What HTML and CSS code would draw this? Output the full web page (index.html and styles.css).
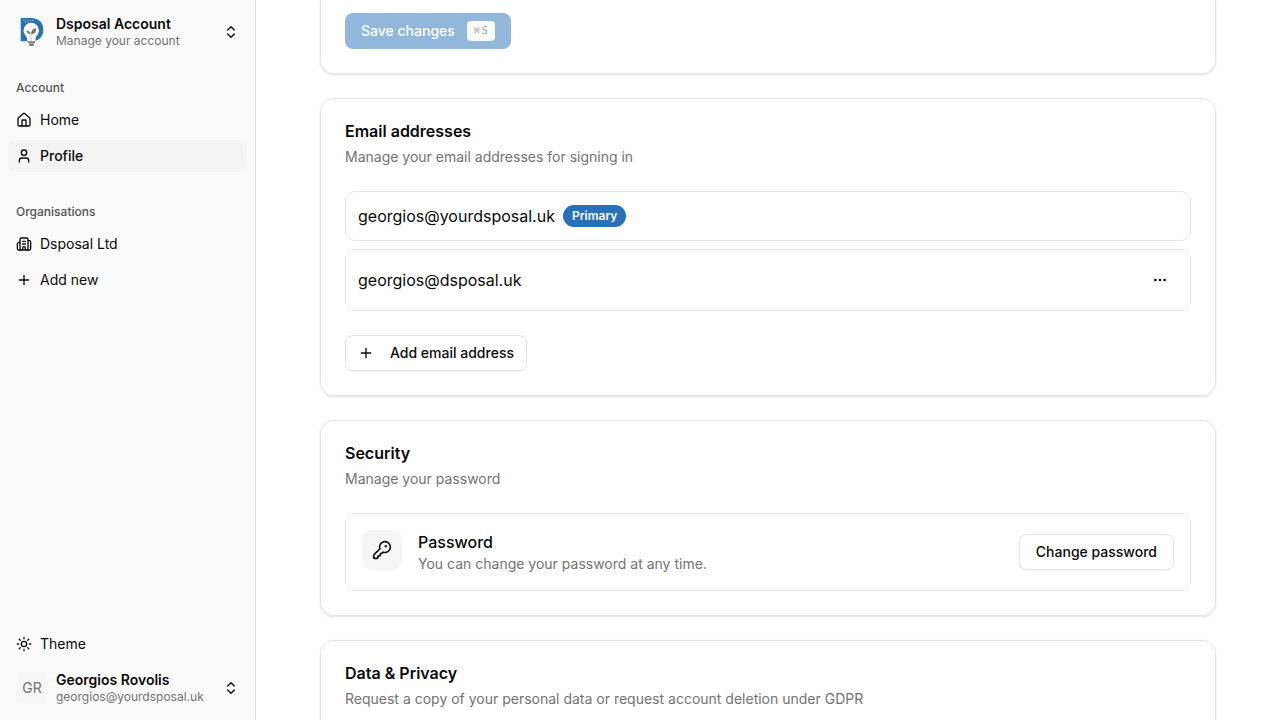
FILE: index.html
```
<!DOCTYPE html>
<html lang="en">
<head>
    <meta charset="UTF-8">
    <meta name="viewport" content="width=device-width, initial-scale=1.0">
    <title>Profile - Dsposal Account</title>
    <link rel="stylesheet" href="styles.css">
</head>
<body>
    <aside class="sidebar">
        <button class="account-btn" type="button">
            <svg class="logo" viewBox="0 0 32 32" aria-hidden="true">
                <path fill="#2771b8" d="M4.700 2H15c8 0 12.300 5 12.300 11.700S23 25.300 15 25.300H4.700z"/>
                <g fill="#fff">
                    <circle cx="8" cy="4.500" r=".5"/><circle cx="11" cy="4.500" r=".5"/><circle cx="14" cy="4.500" r=".5"/><circle cx="17" cy="4.500" r=".5"/>
                    <circle cx="9.500" cy="6.500" r=".5"/><circle cx="12.500" cy="6.500" r=".4"/>
                    <path d="M15.300 6.700a7.800 7.800 0 0 1 7.700 7.700c0 3.600-2.600 4.800-3.300 7.600l-.7 4h-7.400l-.7-4c-.7-2.800-3.400-4-3.400-7.600a7.800 7.800 0 0 1 7.800-7.700z"/>
                </g>
                <path fill="#777" d="M14.600 18c-2.500.3-3.900-1-4.100-3.500 2.500 0 4 1.200 4.100 3.500zm.8.300c-.5-3.600 1.300-5.800 4.800-6.100.2 3.700-1.400 6-4.800 6.100zM11.700 25.200h7.300v1.800h-7.300zM12.700 27.600h5.400v1l-1.300 1.300H14l-1.300-1.300z"/>
                <path fill="none" stroke="#aaa" stroke-width=".7" d="M15 25v-7"/>
            </svg>
            <span class="account-text">
                <span class="account-name">Dsposal Account</span>
                <span class="account-sub">Manage your account</span>
            </span>
            <svg class="icon" viewBox="0 0 24 24" aria-hidden="true"><path d="m7 15 5 5 5-5"/><path d="m7 9 5-5 5 5"/></svg>
        </button>

        <nav class="nav">
            <div class="nav-group">
                <h2 class="nav-label">Account</h2>
                <a class="nav-item" href="#home">
                    <svg class="icon" viewBox="0 0 24 24" aria-hidden="true"><path d="M15 21v-8a1 1 0 0 0-1-1h-4a1 1 0 0 0-1 1v8"/><path d="M3 10a2 2 0 0 1 .709-1.528l7-6a2 2 0 0 1 2.582 0l7 6A2 2 0 0 1 21 10v9a2 2 0 0 1-2 2H5a2 2 0 0 1-2-2z"/></svg>
                    Home
                </a>
                <a class="nav-item active" href="#profile">
                    <svg class="icon" viewBox="0 0 24 24" aria-hidden="true"><path d="M19 21v-2a4 4 0 0 0-4-4H9a4 4 0 0 0-4 4v2"/><circle cx="12" cy="7" r="4"/></svg>
                    Profile
                </a>
            </div>
            <div class="nav-group">
                <h2 class="nav-label">Organisations</h2>
                <a class="nav-item" href="#dsposal">
                    <svg class="icon" viewBox="0 0 24 24" aria-hidden="true"><path d="M10 12h4M10 8h4M14 21v-3a2 2 0 0 0-4 0v3"/><path d="M6 10H4a2 2 0 0 0-2 2v7a2 2 0 0 0 2 2h16a2 2 0 0 0 2-2V9a2 2 0 0 0-2-2h-2"/><path d="M6 21V5a2 2 0 0 1 2-2h8a2 2 0 0 1 2 2v16"/></svg>
                    Dsposal Ltd
                </a>
                <a class="nav-item" href="#new">
                    <svg class="icon" viewBox="0 0 24 24" aria-hidden="true"><path d="M5 12h14M12 5v14"/></svg>
                    Add new
                </a>
            </div>
        </nav>

        <div class="sidebar-footer">
            <button class="nav-item" type="button">
                <svg class="icon" viewBox="0 0 24 24" aria-hidden="true"><circle cx="12" cy="12" r="4"/><path d="M12 2v2M12 20v2M4.930 4.930l1.410 1.410M17.660 17.660l1.410 1.410M2 12h2M20 12h2M6.340 17.660l-1.410 1.410M19.070 4.930l-1.410 1.410"/></svg>
                Theme
            </button>
            <button class="account-btn" type="button">
                <span class="avatar">GR</span>
                <span class="account-text">
                    <span class="account-name">Georgios Rovolis</span>
                    <span class="account-sub">georgios@yourdsposal.uk</span>
                </span>
                <svg class="icon" viewBox="0 0 24 24" aria-hidden="true"><path d="m7 15 5 5 5-5"/><path d="m7 9 5-5 5 5"/></svg>
            </button>
        </div>
    </aside>

    <main class="content">
        <div class="cards">
            <section class="card card-continued">
                <button class="btn btn-primary" type="submit" disabled>Save changes <kbd><span class="cmd">⌘</span>S</kbd></button>
            </section>

            <section class="card">
                <h2 class="card-title">Email addresses</h2>
                <p class="card-desc">Manage your email addresses for signing in</p>
                <ul class="email-list">
                    <li class="email-row">georgios@yourdsposal.uk <span class="badge">Primary</span></li>
                    <li class="email-row">
                        georgios@dsposal.uk
                        <button class="menu-btn" type="button" aria-label="More options">
                            <svg class="icon" viewBox="0 0 24 24" aria-hidden="true"><circle cx="12" cy="12" r="1"/><circle cx="19" cy="12" r="1"/><circle cx="5" cy="12" r="1"/></svg>
                        </button>
                    </li>
                </ul>
                <button class="btn btn-outline btn-add" type="button">
                    <svg class="icon" viewBox="0 0 24 24" aria-hidden="true"><path d="M5 12h14M12 5v14"/></svg>
                    Add email address
                </button>
            </section>

            <section class="card">
                <h2 class="card-title">Security</h2>
                <p class="card-desc">Manage your password</p>
                <div class="security-row">
                    <span class="security-icon">
                        <svg class="icon icon-lg" viewBox="0 0 24 24" aria-hidden="true"><path d="M2.586 17.414A2 2 0 0 0 2 18.828V21a1 1 0 0 0 1 1h3a1 1 0 0 0 1-1v-1a1 1 0 0 1 1-1h1a1 1 0 0 0 1-1v-1a1 1 0 0 1 1-1h.172a2 2 0 0 0 1.414-.586l.814-.814a6.500 6.500 0 1 0-4-4z"/><circle cx="16.500" cy="7.500" r=".5" fill="currentColor"/></svg>
                    </span>
                    <div class="security-text">
                        <h3>Password</h3>
                        <p>You can change your password at any time.</p>
                    </div>
                    <button class="btn btn-outline" type="button">Change password</button>
                </div>
            </section>

            <section class="card">
                <h2 class="card-title">Data &amp; Privacy</h2>
                <p class="card-desc">Request a copy of your personal data or request account deletion under GDPR</p>
            </section>
        </div>
    </main>
</body>
</html>
```
FILE: styles.css
```
:root {
    --primary: #2771b8;
    --primary-disabled: #91b7da;
    --sidebar: #fafafa;
    --accent: #f5f5f5;
    --text: #0a0a0a;
    --muted: #737373;
    --border: #e5e5e5;
}

* {
    margin: 0;
    padding: 0;
    box-sizing: border-box;
}

body {
    display: flex;
    height: 100vh;
    overflow: hidden;
    background-color: #fff;
    color: var(--text);
    font-family: Inter, sans-serif;
    font-size: 16px;
    line-height: 24px;
}

button {
    border: none;
    background: none;
    color: inherit;
    font: inherit;
    cursor: pointer;
}

.icon {
    width: 16px;
    height: 16px;
    flex-shrink: 0;
    fill: none;
    stroke: currentColor;
    stroke-width: 2;
    stroke-linecap: round;
    stroke-linejoin: round;
}

.icon-lg {
    width: 20px;
    height: 20px;
}

/* Sidebar */
.sidebar {
    display: flex;
    flex-direction: column;
    flex-shrink: 0;
    gap: 8px;
    width: 256px;
    padding: 8px;
    background-color: var(--sidebar);
    border-right: 1px solid var(--border);
}

.account-btn {
    display: flex;
    align-items: center;
    gap: 8px;
    width: 100%;
    height: 48px;
    padding: 0 8px;
    border-radius: 8px;
    text-align: left;
}

.logo,
.avatar {
    width: 32px;
    height: 32px;
    flex-shrink: 0;
}

.avatar {
    display: flex;
    align-items: center;
    justify-content: center;
    border-radius: 8px;
    background-color: var(--accent);
    color: var(--muted);
    font-size: 14px;
}

.account-text {
    display: flex;
    flex: 1;
    flex-direction: column;
    min-width: 0;
}

.account-name {
    font-size: 14px;
    font-weight: 600;
    line-height: 18px;
}

.account-sub {
    color: var(--muted);
    font-size: 12px;
    line-height: 16px;
}

.nav {
    display: flex;
    flex: 1;
    flex-direction: column;
    gap: 24px;
    padding-top: 8px;
}

.nav-group,
.sidebar-footer {
    display: flex;
    flex-direction: column;
    gap: 4px;
}

.nav-label {
    margin-bottom: -4px;
    padding: 0 8px;
    color: #525252;
    font-size: 12px;
    font-weight: 500;
    line-height: 32px;
}

.nav-item {
    display: flex;
    align-items: center;
    gap: 8px;
    height: 32px;
    padding: 0 8px;
    border-radius: 8px;
    color: var(--text);
    font-size: 14px;
    text-decoration: none;
}

.nav-item.active {
    background-color: #f4f4f4;
    font-weight: 500;
}

/* Content */
.content {
    flex: 1;
    min-width: 0;
    padding: 0 64px;
    overflow: hidden;
}

.cards {
    display: flex;
    flex-direction: column;
    gap: 24px;
    max-width: 896px;
    margin: 0 auto;
}

.card {
    padding: 24px;
    border: 1px solid var(--border);
    border-radius: 14px;
    box-shadow: 0 1px 3px rgba(0, 0, 0, 0.1), 0 1px 2px -1px rgba(0, 0, 0, 0.1);
}

.card-continued {
    padding-top: 13px;
    border-top: none;
    border-radius: 0 0 14px 14px;
}

.card-title {
    margin-bottom: 8px;
    font-size: 16px;
    font-weight: 600;
    line-height: 16px;
}

.card-desc {
    margin-bottom: 24px;
    color: var(--muted);
    font-size: 14px;
    line-height: 20px;
}

.btn {
    display: flex;
    align-items: center;
    height: 36px;
    padding: 0 16px;
    border-radius: 8px;
    font-size: 14px;
    font-weight: 500;
    white-space: nowrap;
}

.btn-primary {
    gap: 12px;
    background-color: var(--primary-disabled);
    color: #fff;
}

.btn-outline {
    border: 1px solid var(--border);
    background-color: #fff;
    box-shadow: 0 1px 2px rgba(0, 0, 0, 0.05);
}

.btn-add {
    gap: 16px;
    padding: 0 12px;
}

kbd {
    display: flex;
    align-items: center;
    justify-content: center;
    gap: 2px;
    width: 28px;
    height: 20px;
    border-radius: 4px;
    background-color: #fafafa;
    color: #a3a3a3;
    font-family: "DejaVu Sans Mono", monospace;
    font-size: 10px;
}

.email-list {
    display: flex;
    flex-direction: column;
    gap: 8px;
    margin-bottom: 24px;
    list-style: none;
}

.email-row {
    display: flex;
    align-items: center;
    gap: 8px;
    padding: 12px;
    border: 1px solid var(--border);
    border-radius: 10px;
}

.badge {
    padding: 3px 9px;
    border-radius: 11px;
    background-color: var(--primary);
    color: #fff;
    font-size: 12px;
    font-weight: 600;
    line-height: 16px;
}

.menu-btn {
    display: flex;
    align-items: center;
    justify-content: center;
    width: 36px;
    height: 36px;
    margin-left: auto;
    border-radius: 8px;
}

.security-row {
    display: flex;
    align-items: center;
    gap: 16px;
    padding: 16px;
    border: 1px solid var(--border);
    border-radius: 10px;
}

.security-icon {
    display: flex;
    align-items: center;
    align-self: flex-start;
    justify-content: center;
    width: 40px;
    height: 40px;
    border-radius: 10px;
    background-color: var(--accent);
}

.security-text {
    flex: 1;
}

.security-text h3 {
    font-size: 16px;
    font-weight: 500;
}

.security-text p {
    color: var(--muted);
    font-size: 14px;
    line-height: 20px;
}
```
